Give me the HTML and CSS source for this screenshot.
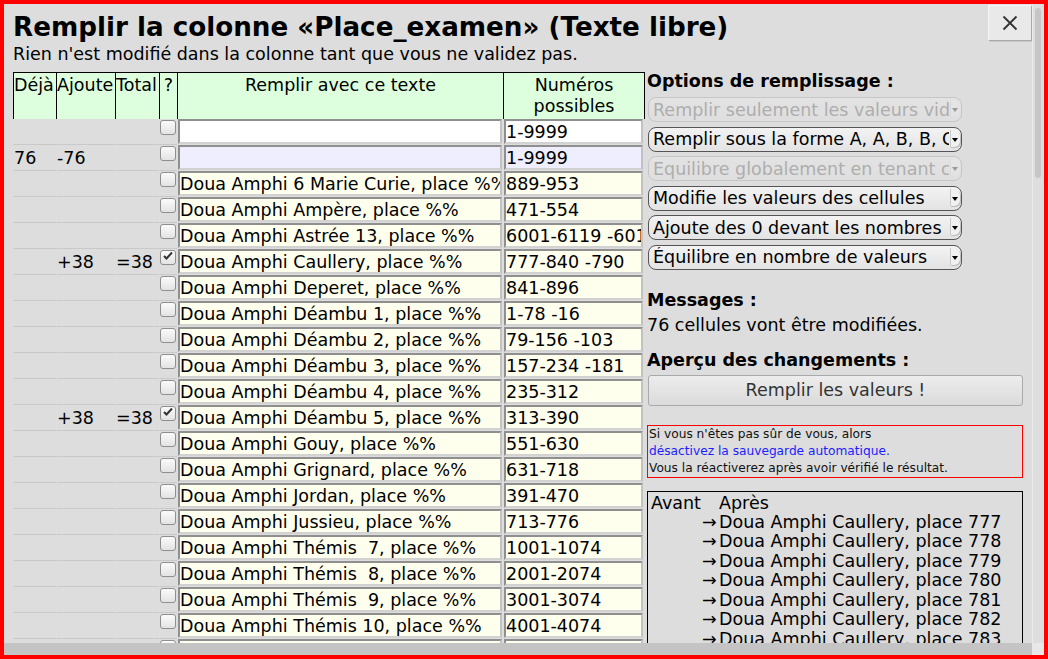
FILE: index.html
```html
<!DOCTYPE html>
<html lang="fr">

<head>
  <meta charset="UTF-8" />
  <meta name="viewport" content="width=device-width, initial-scale=1.0" />
  <title>Remplir la colonne</title>
  <link rel="stylesheet" href="styles.css">
</head>

<body>

  <div class="dialog">
    <div class="dialog-view">
      <!-- Close button -->
      <button class="close-btn" title="Fermer">
        <svg width="16" height="16" viewBox="0 0 16 16">
          <path d="M1.5 1.5 L14.5 14.5 M14.5 1.5 L1.5 14.5" stroke="#333" stroke-width="1.8" fill="none" />
        </svg>
      </button>

      <div class="dialog-content">
        <h1>Remplir la colonne «Place_examen» (Texte libre)</h1>
        <p class="subtitle">Rien n'est modifié dans la colonne tant que vous ne validez pas.</p>

        <div class="columns">

          <!-- Values table -->
          <table class="fill-table">
            <colgroup>
              <col style="width:43px">
              <col style="width:59px">
              <col style="width:44px">
              <col style="width:18px">
              <col style="width:326px">
              <col style="width:142px">
            </colgroup>
            <thead>
              <tr>
                <th>Déjà</th>
                <th>Ajoute</th>
                <th>Total</th>
                <th class="center">?</th>
                <th class="center">Remplir avec ce texte</th>
                <th class="center last">Numéros possibles</th>
              </tr>
            </thead>
            <tbody>
              <tr class="blank">
                <td></td><td></td><td></td>
                <td class="chk"><span class="cb"></span></td>
                <td><input class="txt" value=""></td>
                <td class="last"><input class="txt" value="1-9999"></td>
              </tr>
              <tr class="empty">
                <td>76</td><td>-76</td><td></td>
                <td class="chk"><span class="cb"></span></td>
                <td><input class="txt" value=""></td>
                <td class="last"><input class="txt" value="1-9999"></td>
              </tr>
              <tr>
                <td></td><td></td><td></td>
                <td class="chk"><span class="cb"></span></td>
                <td><input class="txt" value="Doua Amphi 6 Marie Curie, place %%"></td>
                <td class="last"><input class="txt" value="889-953"></td>
              </tr>
              <tr>
                <td></td><td></td><td></td>
                <td class="chk"><span class="cb"></span></td>
                <td><input class="txt" value="Doua Amphi Ampère, place %%"></td>
                <td class="last"><input class="txt" value="471-554"></td>
              </tr>
              <tr>
                <td></td><td></td><td></td>
                <td class="chk"><span class="cb"></span></td>
                <td><input class="txt" value="Doua Amphi Astrée 13, place %%"></td>
                <td class="last"><input class="txt" value="6001-6119 -6010"></td>
              </tr>
              <tr>
                <td></td><td>+38</td><td>=38</td>
                <td class="chk"><span class="cb checked"><svg width="14" height="13" viewBox="0 0 14 13"><path d="M3 6 L5.5 8.5 L11 2.5" stroke="#333" stroke-width="2" fill="none" /></svg></span></td>
                <td><input class="txt" value="Doua Amphi Caullery, place %%"></td>
                <td class="last"><input class="txt" value="777-840 -790"></td>
              </tr>
              <tr>
                <td></td><td></td><td></td>
                <td class="chk"><span class="cb"></span></td>
                <td><input class="txt" value="Doua Amphi Deperet, place %%"></td>
                <td class="last"><input class="txt" value="841-896"></td>
              </tr>
              <tr>
                <td></td><td></td><td></td>
                <td class="chk"><span class="cb"></span></td>
                <td><input class="txt" value="Doua Amphi Déambu 1, place %%"></td>
                <td class="last"><input class="txt" value="1-78 -16"></td>
              </tr>
              <tr>
                <td></td><td></td><td></td>
                <td class="chk"><span class="cb"></span></td>
                <td><input class="txt" value="Doua Amphi Déambu 2, place %%"></td>
                <td class="last"><input class="txt" value="79-156 -103"></td>
              </tr>
              <tr>
                <td></td><td></td><td></td>
                <td class="chk"><span class="cb"></span></td>
                <td><input class="txt" value="Doua Amphi Déambu 3, place %%"></td>
                <td class="last"><input class="txt" value="157-234 -181"></td>
              </tr>
              <tr>
                <td></td><td></td><td></td>
                <td class="chk"><span class="cb"></span></td>
                <td><input class="txt" value="Doua Amphi Déambu 4, place %%"></td>
                <td class="last"><input class="txt" value="235-312"></td>
              </tr>
              <tr>
                <td></td><td>+38</td><td>=38</td>
                <td class="chk"><span class="cb checked"><svg width="14" height="13" viewBox="0 0 14 13"><path d="M3 6 L5.5 8.5 L11 2.5" stroke="#333" stroke-width="2" fill="none" /></svg></span></td>
                <td><input class="txt" value="Doua Amphi Déambu 5, place %%"></td>
                <td class="last"><input class="txt" value="313-390"></td>
              </tr>
              <tr>
                <td></td><td></td><td></td>
                <td class="chk"><span class="cb"></span></td>
                <td><input class="txt" value="Doua Amphi Gouy, place %%"></td>
                <td class="last"><input class="txt" value="551-630"></td>
              </tr>
              <tr>
                <td></td><td></td><td></td>
                <td class="chk"><span class="cb"></span></td>
                <td><input class="txt" value="Doua Amphi Grignard, place %%"></td>
                <td class="last"><input class="txt" value="631-718"></td>
              </tr>
              <tr>
                <td></td><td></td><td></td>
                <td class="chk"><span class="cb"></span></td>
                <td><input class="txt" value="Doua Amphi Jordan, place %%"></td>
                <td class="last"><input class="txt" value="391-470"></td>
              </tr>
              <tr>
                <td></td><td></td><td></td>
                <td class="chk"><span class="cb"></span></td>
                <td><input class="txt" value="Doua Amphi Jussieu, place %%"></td>
                <td class="last"><input class="txt" value="713-776"></td>
              </tr>
              <tr>
                <td></td><td></td><td></td>
                <td class="chk"><span class="cb"></span></td>
                <td><input class="txt" value="Doua Amphi Thémis  7, place %%"></td>
                <td class="last"><input class="txt" value="1001-1074"></td>
              </tr>
              <tr>
                <td></td><td></td><td></td>
                <td class="chk"><span class="cb"></span></td>
                <td><input class="txt" value="Doua Amphi Thémis  8, place %%"></td>
                <td class="last"><input class="txt" value="2001-2074"></td>
              </tr>
              <tr>
                <td></td><td></td><td></td>
                <td class="chk"><span class="cb"></span></td>
                <td><input class="txt" value="Doua Amphi Thémis  9, place %%"></td>
                <td class="last"><input class="txt" value="3001-3074"></td>
              </tr>
              <tr>
                <td></td><td></td><td></td>
                <td class="chk"><span class="cb"></span></td>
                <td><input class="txt" value="Doua Amphi Thémis 10, place %%"></td>
                <td class="last"><input class="txt" value="4001-4074"></td>
              </tr>
              <tr>
                <td></td><td></td><td></td>
                <td class="chk"><span class="cb"></span></td>
                <td><input class="txt" value="Doua Amphi Thémis 11, place %%"></td>
                <td class="last"><input class="txt" value="5001-5074"></td>
              </tr>
            </tbody>
          </table>

          <!-- Options panel -->
          <div class="options">
            <h3 class="first">Options de remplissage :</h3>
            <div class="sel disabled">
              <select disabled><option>Remplir seulement les valeurs vides</option></select>
            </div>
            <div class="sel">
              <select><option>Remplir sous la forme A, A, B, B, C, C</option></select>
            </div>
            <div class="sel disabled">
              <select disabled><option>Equilibre globalement en tenant compte</option></select>
            </div>
            <div class="sel">
              <select><option>Modifie les valeurs des cellules</option></select>
            </div>
            <div class="sel">
              <select><option>Ajoute des 0 devant les nombres</option></select>
            </div>
            <div class="sel">
              <select><option>Équilibre en nombre de valeurs</option></select>
            </div>

            <h3 class="messages">Messages :</h3>
            <p class="message">76 cellules vont être modifiées.</p>

            <h3 class="preview-title">Aperçu des changements :</h3>
            <button class="fill-btn">Remplir les valeurs !</button>

            <div class="warning">
              Si vous n'êtes pas sûr de vous, alors<br>
              <a href="#">désactivez la sauvegarde automatique.</a><br>
              Vous la réactiverez après avoir vérifié le résultat.
            </div>

            <div class="preview">
              <div class="preview-head"><span>Avant</span><span></span><span>Après</span></div>
              <div class="preview-row"><span></span><span>→</span><span>Doua Amphi Caullery, place 777</span></div>
              <div class="preview-row"><span></span><span>→</span><span>Doua Amphi Caullery, place 778</span></div>
              <div class="preview-row"><span></span><span>→</span><span>Doua Amphi Caullery, place 779</span></div>
              <div class="preview-row"><span></span><span>→</span><span>Doua Amphi Caullery, place 780</span></div>
              <div class="preview-row"><span></span><span>→</span><span>Doua Amphi Caullery, place 781</span></div>
              <div class="preview-row"><span></span><span>→</span><span>Doua Amphi Caullery, place 782</span></div>
              <div class="preview-row"><span></span><span>→</span><span>Doua Amphi Caullery, place 783</span></div>
              <div class="preview-row"><span></span><span>→</span><span>Doua Amphi Caullery, place 784</span></div>
            </div>
          </div>

        </div>
      </div>
    </div>

    <!-- Scrollbars -->
    <div class="vscroll"><div class="vthumb"></div></div>
    <div class="hscroll"></div>
    <div class="corner"></div>
  </div>

</body>

</html>
```

FILE: styles.css
```css
html,
body {
  margin: 0;
  padding: 0;
  overflow: hidden;
}

body {
  font-family: "DejaVu Sans", "Liberation Sans", sans-serif;
  font-size: 17.5px;
  color: #000;
  background-color: #dddddd;
}

/* Dialog */
.dialog {
  width: 1048px;
  height: 659px;
  box-sizing: border-box;
  border: 4px solid #ff0000;
  background-color: #dddddd;
  display: grid;
  grid-template-columns: 1028px 12px;
  grid-template-rows: 639px 12px;
}

.dialog-view {
  position: relative;
  overflow: hidden;
}

.vscroll {
  background-color: #dedede;
  border-left: 1px solid #ebebeb;
  box-sizing: border-box;
  padding: 4px 0 0 2px;
}

.vthumb {
  width: 6px;
  height: 170px;
  border-radius: 3px;
  background-color: #c6c6c6;
}

.hscroll {
  background-color: #c4c4c4;
}

.corner {
  background-color: #e8e8e8;
}

.dialog-content {
  padding-left: 9px;
}

.close-btn {
  position: absolute;
  top: 1px;
  right: 1px;
  width: 43px;
  height: 35px;
  padding: 0;
  border: none;
  background-color: #e9e9e9;
  box-shadow: inset 1px 1px 0 #f7f7f7, 1px 1px 0 #a9a9a9, 2px 2px 0 #c8c8c8;
  display: flex;
  align-items: center;
  justify-content: center;
  cursor: pointer;
}

h1 {
  margin: 9px 0 3px;
  font-size: 26.2px;
  line-height: 28px;
  font-weight: bold;
  white-space: nowrap;
}

.subtitle {
  margin: 0 0 8px;
  line-height: 20px;
}

.columns {
  display: flex;
  align-items: flex-start;
}

/* Table */
.fill-table {
  width: 632px;
  table-layout: fixed;
  border-collapse: separate;
  border-spacing: 0;
  flex: 0 0 auto;
}

.fill-table th {
  background-color: #ddffdd;
  border-top: 1px solid #000;
  border-left: 1px solid #000;
  font-weight: normal;
  text-align: left;
  vertical-align: top;
  padding: 2px 0;
  line-height: 21px;
  overflow: hidden;
  white-space: nowrap;
}

.fill-table th.center {
  text-align: center;
  white-space: normal;
}

.fill-table th.last {
  border-right: 1px solid #000;
}

.fill-table td {
  padding: 0;
  border-left: 1px solid transparent;
  vertical-align: middle;
  white-space: nowrap;
  overflow: hidden;
}

.fill-table td:nth-child(-n+4) {
  border-bottom: 1px solid #c9c9c9;
}

.fill-table td.last {
  border-right: 1px solid transparent;
}

.fill-table td.chk {
  vertical-align: top;
}

.cb {
  display: block;
  width: 16px;
  height: 15px;
  margin-top: 1px;
  box-sizing: border-box;
  border: 1px solid #8e8e8e;
  border-radius: 3px;
  background: linear-gradient(#fbfbfb, #e3e3e3);
}

.cb svg {
  display: block;
  margin: -1px 0 0 0;
}

.txt {
  display: block;
  width: calc(100% - 1px);
  height: 25px;
  margin: 0 0 1px;
  padding: 0;
  box-sizing: border-box;
  border: 2px solid;
  border-color: #8f8f8f #c2c2c2 #d2d2d2 #8f8f8f;
  border-radius: 0;
  background-color: #ffffee;
  font: inherit;
  color: #000;
  outline: none;
}

.blank .txt {
  background-color: #ffffff;
}

.empty .txt {
  background-color: #eeeeff;
}

/* Options panel */
.options {
  width: 376px;
  margin-left: 2px;
}

.options h3 {
  margin: 0;
  font-size: 17.5px;
  line-height: 18px;
  font-weight: bold;
}

.sel {
  position: relative;
  width: 314px;
  height: 25px;
  margin: 0 0 4.5px 1px;
}

.options h3.first {
  margin-bottom: 7px;
}

.sel select {
  appearance: none;
  -webkit-appearance: none;
  width: 100%;
  height: 100%;
  box-sizing: border-box;
  padding: 0 12px 0 4px;
  border: 1px solid #555;
  border-radius: 8px;
  background: linear-gradient(#f3f3f3, #e3e3e3);
  font: inherit;
  color: #000;
  outline: none;
}

.sel::before {
  content: "";
  position: absolute;
  right: 2px;
  top: 3px;
  width: 9px;
  height: 17px;
  background-color: #f1f1f1;
  border-left: 1px solid #c9c9c9;
  border-radius: 0 6px 6px 0;
  box-shadow: 1px 1px 0 #bdbdbd;
}

.sel::after {
  content: "";
  position: absolute;
  right: 4px;
  top: 11px;
  border-left: 3px solid transparent;
  border-right: 3px solid transparent;
  border-top: 4px solid #000;
}

.sel.disabled select {
  color: #9a9a9a;
  border-color: #bdbdbd;
  background: linear-gradient(#e6e6e6, #e0e0e0);
}

.sel.disabled::after {
  border-top-color: #9a9a9a;
}

.sel.disabled::before {
  background-color: #e6e6e6;
  box-shadow: none;
}

.options h3.messages {
  margin-top: 21px;
}

.message {
  margin: 6px 0 0;
  line-height: 20px;
}

.options h3.preview-title {
  margin-top: 16px;
}

.fill-btn {
  display: block;
  width: 375px;
  height: 31px;
  margin: 6px 0 0 1px;
  padding: 0;
  border: 1px solid #a9a9a9;
  border-radius: 3px;
  background: linear-gradient(#ededed, #dadada);
  font: inherit;
  color: #333;
  cursor: pointer;
}

.warning {
  margin-top: 19px;
  border: 1px solid #ff0000;
  padding: 0 1px;
  font-size: 12.2px;
  line-height: 17.1px;
  color: #111;
  white-space: nowrap;
}

.warning a {
  color: #1c1cff;
  text-decoration: none;
}

.preview {
  margin-top: 13px;
  border: 1px solid #000;
  padding: 1px 0 0 3px;
}

.preview-head,
.preview-row {
  display: grid;
  grid-template-columns: 51px 17px 1fr;
  white-space: nowrap;
}

.preview-row {
  line-height: 19.5px;
}
```
